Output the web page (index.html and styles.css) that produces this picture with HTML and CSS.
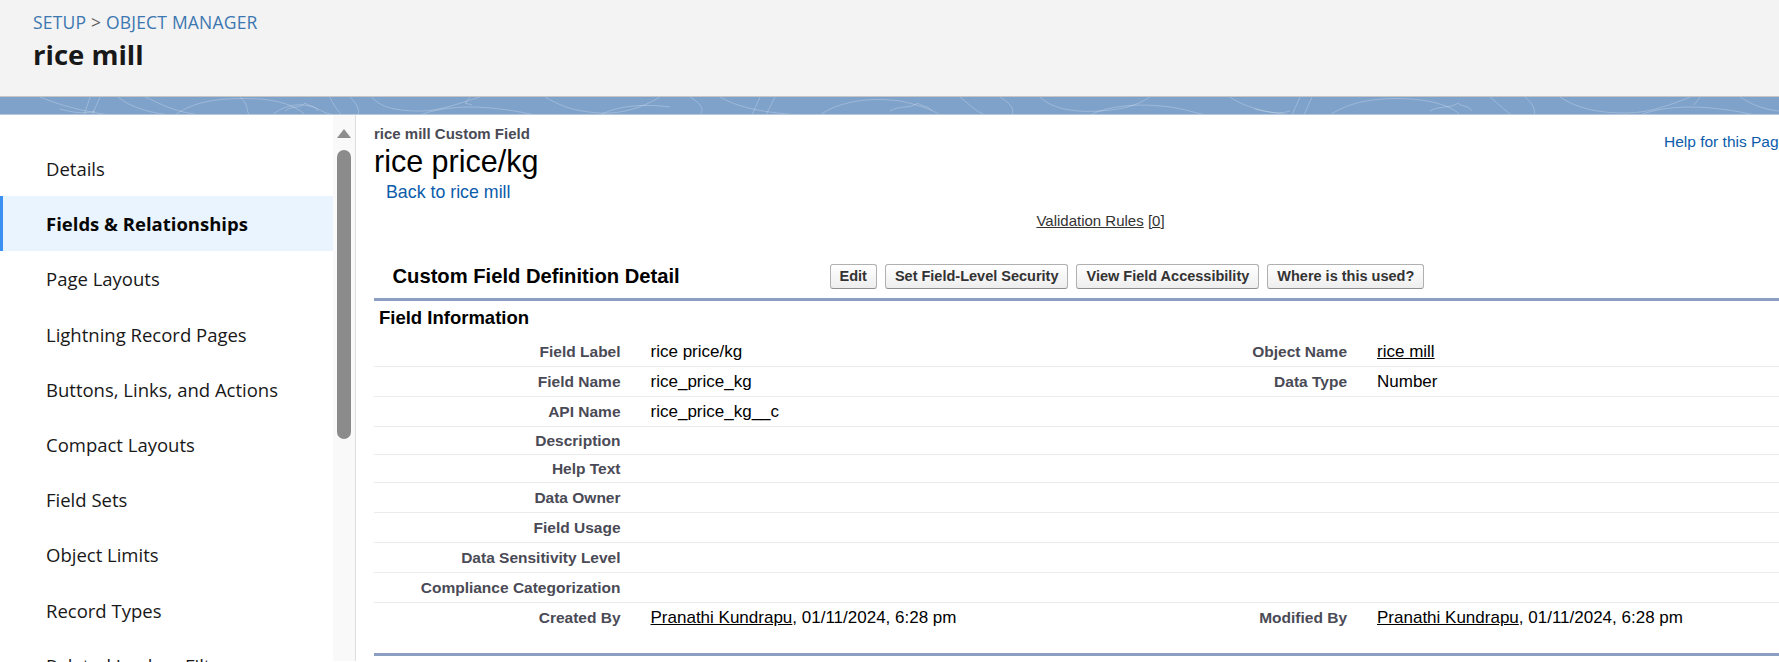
FILE: index.html
```html
<!DOCTYPE html>
<html lang="en">
<head>
<meta charset="utf-8">
<title>rice mill | Object Manager</title>
<link rel="stylesheet" href="styles.css">
</head>
<body>
<header class="page-header">
  <div class="breadcrumb"><a href="#">SETUP</a> <span class="sep">&gt;</span> <a href="#">OBJECT MANAGER</a></div>
  <h1 class="object-title">rice mill</h1>
</header>
<div class="band">
  <svg class="band-art" width="1779" height="18" viewBox="0 0 1779 18" fill="none" stroke="#ffffff" stroke-opacity="0.24" stroke-width="1">
    <path d="M40 0 C60 8 80 14 110 18"/>
    <path d="M60 12 C75 16 85 17 95 14"/>
    <path d="M90 0 L84 18"/>
    <path d="M100 0 L92 18"/>
    <path d="M118 0 C130 10 150 16 170 18"/>
    <path d="M145 0 C160 6 170 14 200 18"/>
    <path d="M175 18 C195 4 220 0 260 2 C285 4 300 12 305 18"/>
    <path d="M240 0 C250 8 245 14 250 18"/>
    <path d="M272 18 C285 8 300 4 318 12 C325 16 330 18 340 18"/>
    <path d="M285 14 C292 8 300 12 305 6 C310 10 315 8 318 14"/>
    <path d="M330 0 C333 8 338 14 342 18"/>
    <path d="M350 0 C356 6 360 12 358 18"/>
    <path d="M372 0 C380 10 395 14 420 14 C440 14 460 6 480 0"/>
    <path d="M420 18 C440 10 470 8 500 12 C520 14 530 18 540 18"/>
    <path d="M470 0 L465 6 L472 8"/>
    <path d="M545 0 C560 8 570 14 600 16 C620 17 640 12 660 0"/>
    <path d="M600 18 C615 10 640 6 670 10"/>
    <path d="M690 0 C700 6 705 12 700 18"/>
    <path d="M720 0 C740 12 770 16 800 18"/>
    <path d="M760 0 L752 18"/>
    <path d="M775 0 L766 18"/>
    <path d="M820 18 C840 4 870 0 900 4 C920 8 935 14 940 18"/>
    <path d="M890 14 C900 8 910 12 918 6 C922 10 928 8 932 14"/>
    <path d="M960 0 C970 8 975 14 985 18"/>
    <path d="M1000 0 C1010 6 1015 12 1012 18"/>
    <path d="M1040 0 C1050 10 1070 16 1100 14 C1130 12 1140 6 1150 0"/>
    <path d="M1090 18 C1110 8 1140 6 1170 10 C1190 13 1200 18 1210 18"/>
    <path d="M1230 0 C1245 10 1265 16 1295 18"/>
    <path d="M1255 12 C1270 16 1280 17 1290 14"/>
    <path d="M1300 0 L1292 18"/>
    <path d="M1312 0 L1304 18"/>
    <path d="M1330 18 C1350 4 1380 0 1410 2 C1440 4 1455 12 1460 18"/>
    <path d="M1430 14 C1440 8 1450 12 1458 6 C1462 10 1468 8 1472 14"/>
    <path d="M1490 0 C1500 8 1505 14 1512 18"/>
    <path d="M1525 0 C1532 6 1536 12 1534 18"/>
    <path d="M1560 0 C1575 10 1595 16 1625 16 C1650 16 1670 8 1690 0"/>
    <path d="M1640 18 C1660 10 1690 8 1720 12 C1740 14 1750 18 1760 18"/>
    <path d="M1700 0 L1694 8"/>
    <path d="M1740 0 C1750 6 1760 12 1779 14"/>
  </svg>
</div>
<div class="layout">
  <nav class="sidebar">
    <ul class="nav-list">
      <li class="nav-item">Details</li>
      <li class="nav-item is-active">Fields &amp; Relationships</li>
      <li class="nav-item">Page Layouts</li>
      <li class="nav-item">Lightning Record Pages</li>
      <li class="nav-item">Buttons, Links, and Actions</li>
      <li class="nav-item">Compact Layouts</li>
      <li class="nav-item">Field Sets</li>
      <li class="nav-item">Object Limits</li>
      <li class="nav-item">Record Types</li>
      <li class="nav-item">Related Lookup Filters</li>
    </ul>
  </nav>
  <div class="scroll-track">
    <span class="scroll-arrow"></span>
    <span class="scroll-thumb"></span>
  </div>
  <main class="main">
    <div class="content">
      <div class="title-row">
        <div class="title-block">
          <div class="page-type">rice mill Custom Field</div>
          <h2 class="page-desc">rice price/kg</h2>
          <a class="back-link" href="#">Back to rice mill</a>
        </div>
        <a class="help-link" href="#">Help for this Page</a>
      </div>
      <div class="related-links"><a href="#" class="ulink">Validation Rules</a> [<a href="#" class="ulink">0</a>]</div>

      <section class="detail-block">
        <div class="block-header">
          <h3 class="block-title">Custom Field Definition Detail</h3>
          <div class="buttons">
            <button class="btn">Edit</button>
            <button class="btn">Set Field-Level Security</button>
            <button class="btn">View Field Accessibility</button>
            <button class="btn">Where is this used?</button>
          </div>
        </div>
        <h4 class="section-title">Field Information</h4>
        <div class="detail-list">
          <div class="row">
            <div class="label">Field Label</div><div class="data">rice price/kg</div>
            <div class="label">Object Name</div><div class="data"><a href="#" class="ulink">rice mill</a></div>
          </div>
          <div class="row">
            <div class="label">Field Name</div><div class="data">rice_price_kg</div>
            <div class="label">Data Type</div><div class="data">Number</div>
          </div>
          <div class="row">
            <div class="label">API Name</div><div class="data">rice_price_kg__c</div>
            <div class="label"></div><div class="data"></div>
          </div>
          <div class="row row-short">
            <div class="label">Description</div><div class="data"></div>
            <div class="label"></div><div class="data"></div>
          </div>
          <div class="row row-short">
            <div class="label">Help Text</div><div class="data"></div>
            <div class="label"></div><div class="data"></div>
          </div>
          <div class="row">
            <div class="label">Data Owner</div><div class="data"></div>
            <div class="label"></div><div class="data"></div>
          </div>
          <div class="row">
            <div class="label">Field Usage</div><div class="data"></div>
            <div class="label"></div><div class="data"></div>
          </div>
          <div class="row">
            <div class="label">Data Sensitivity Level</div><div class="data"></div>
            <div class="label"></div><div class="data"></div>
          </div>
          <div class="row">
            <div class="label">Compliance Categorization</div><div class="data"></div>
            <div class="label"></div><div class="data"></div>
          </div>
          <div class="row row-last">
            <div class="label">Created By</div><div class="data"><a href="#" class="ulink">Pranathi Kundrapu</a>, 01/11/2024, 6:28 pm</div>
            <div class="label">Modified By</div><div class="data"><a href="#" class="ulink">Pranathi Kundrapu</a>, 01/11/2024, 6:28 pm</div>
          </div>
        </div>
        <div class="block-footer"></div>
      </section>
    </div>
  </main>
</div>
</body>
</html>
```
FILE: styles.css
```css
* { box-sizing: border-box; }

html, body {
  margin: 0;
  padding: 0;
  width: 1779px;
  height: 662px;
  overflow: hidden;
  background: #ffffff;
}

body {
  font-family: "Open Sans", "Noto Sans", sans-serif;
  color: #181818;
}

a { text-decoration: none; }

/* ---------- header ---------- */
.page-header {
  height: 97px;
  background: #f3f3f3;
  padding: 11px 0 0 33px;
  border-bottom: 1px solid #c6c6c6;
}

.breadcrumb {
  font-size: 17.5px;
  line-height: 22px;
  color: #3c77b0;
  letter-spacing: 0.2px;
}

.breadcrumb a { color: #3c77b0; }
.breadcrumb .sep { color: #5a5a5a; }

.object-title {
  margin: 4px 0 0;
  font-size: 27.5px;
  line-height: 36px;
  font-weight: 700;
  color: #181818;
}

/* ---------- decorative band ---------- */
.band {
  height: 18px;
  background: #7fa2cb;
  border-bottom: 1px solid #b9c9dc;
  overflow: hidden;
}

.band-art { display: block; }

/* ---------- layout ---------- */
.layout {
  display: flex;
  height: 546px;
}

.sidebar {
  width: 333px;
  flex: none;
  background: #ffffff;
}

.nav-list {
  list-style: none;
  margin: 0;
  padding: 26px 0 0;
}

.nav-item {
  height: 55.2px;
  line-height: 55.2px;
  padding-left: 43px;
  border-left: 3px solid transparent;
  font-size: 18.5px;
  color: #181818;
  white-space: nowrap;
}

.nav-item.is-active {
  background: #eaf4fe;
  border-left-color: #3b8ff0;
  font-weight: 700;
  color: #080707;
}

.scroll-track {
  width: 23px;
  flex: none;
  background: #f9f9f9;
  border-right: 1px solid #dedede;
  display: flex;
  flex-direction: column;
  align-items: center;
}

.scroll-arrow {
  margin-top: 14px;
  width: 0;
  height: 0;
  border-left: 7.5px solid transparent;
  border-right: 7.5px solid transparent;
  border-bottom: 9px solid #8e8e8e;
}

.scroll-thumb {
  margin-top: 12px;
  width: 14px;
  height: 289px;
  border-radius: 7px;
  background: #8b8b8b;
}

/* ---------- main ---------- */
.main {
  flex: 1;
  overflow: hidden;
  padding: 10px 0 0 18px;
  font-family: "Liberation Sans", Arial, sans-serif;
  color: #000000;
}

.content {
  width: 1453px;
}

.title-row {
  display: grid;
  grid-template-columns: 1fr 163px;
}

.page-type {
  font-size: 15px;
  line-height: 18px;
  font-weight: 700;
  color: #4a4a56;
}

.page-desc {
  margin: 2px 0 0;
  font-size: 30.5px;
  line-height: 32px;
  font-weight: 400;
  color: #000000;
}

.back-link {
  display: inline-block;
  margin-top: 5px;
  padding-left: 12px;
  font-size: 17.8px;
  line-height: 20px;
  color: #0b5cab;
}

.help-link {
  margin-top: 8px;
  font-size: 15.5px;
  line-height: 18px;
  color: #0b5cab;
  white-space: nowrap;
}

.related-links {
  margin-top: 10px;
  text-align: center;
  font-size: 15px;
  line-height: 18px;
  color: #333333;
}

.ulink {
  color: #000000;
  text-decoration: underline;
}

.related-links .ulink { color: #333333; }

/* ---------- detail block ---------- */
.detail-block {
  margin-top: 34px;
}

.block-header {
  display: flex;
  align-items: center;
  padding-bottom: 9px;
  border-bottom: 3px solid #8c9ec1;
}

.block-title {
  flex: none;
  width: 455.5px;
  margin: 0;
  padding-left: 18.5px;
  font-size: 20.2px;
  line-height: 25px;
  font-weight: 700;
  color: #000000;
}

.buttons {
  display: flex;
  gap: 8px;
}

.btn {
  height: 25px;
  padding: 0 9px;
  font-family: "Liberation Sans", Arial, sans-serif;
  font-size: 14.5px;
  font-weight: 700;
  line-height: 23px;
  color: #333333;
  background: linear-gradient(#ffffff, #eeeeee);
  border: 1px solid #b0b0b0;
  border-bottom-color: #8f8f8f;
  border-radius: 3px;
}

.section-title {
  margin: 0 0 8px;
  padding: 6px 0 0 5px;
  font-size: 18.5px;
  line-height: 22px;
  font-weight: 700;
  color: #000000;
}

.row {
  display: grid;
  grid-template-columns: 18% 32% 18% 32%;
  align-items: baseline;
  border-bottom: 1px solid #ececec;
  padding: 5px 0;
}

.row.row-short { padding: 4px 0; }
.row.row-last { border-bottom: 0; }

.label {
  padding-right: 15px;
  text-align: right;
  font-size: 15.5px;
  line-height: 19px;
  font-weight: 700;
  color: #4a4a56;
  white-space: nowrap;
}

.data {
  padding-left: 15px;
  font-size: 17px;
  line-height: 19px;
  color: #000000;
  white-space: nowrap;
}

.block-footer {
  margin-top: 21px;
  border-top: 3px solid #8c9ec1;
}
```
